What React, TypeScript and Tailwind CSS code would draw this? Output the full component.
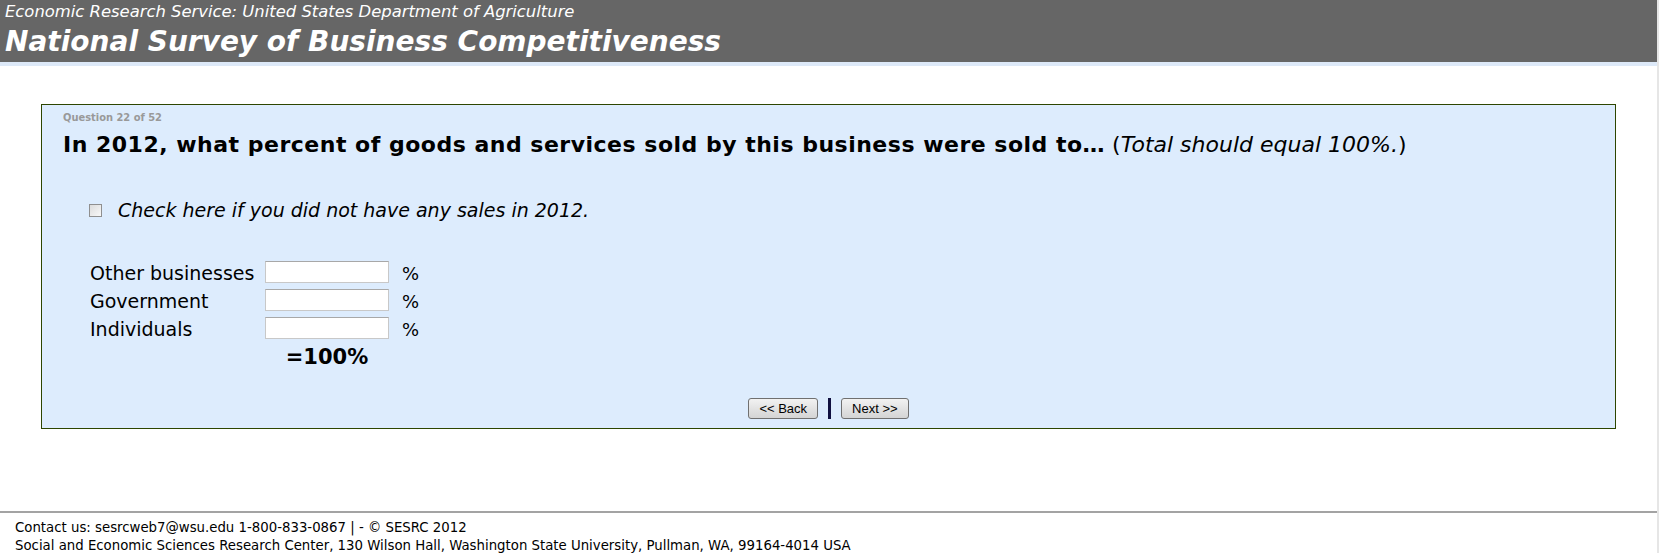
import { useState } from 'react'

const verdana = { fontFamily: '"DejaVu Sans", Verdana, sans-serif' }
const tahoma = { fontFamily: '"DejaVu Sans Condensed", "DejaVu Sans", Tahoma, sans-serif' }
const arial = { fontFamily: '"Liberation Sans", Arial, sans-serif' }

const rows = ['Other businesses', 'Government', 'Individuals']

function NavButton({ label }: { label: string }) {
  return (
    <button
      style={arial}
      className="h-[21px] rounded-[3px] border border-[#707070] bg-gradient-to-b from-[#f2f2f2] to-[#d4d4d4] px-[10px] text-[13px] leading-[19px] text-black"
    >
      {label}
    </button>
  )
}

export default function App() {
  const [noSales, setNoSales] = useState(false)
  const [values, setValues] = useState<Record<string, string>>({})

  return (
    <div className="flex min-h-[553px] w-full bg-white">
      <div className="flex flex-1 flex-col">
        {/* banner */}
        <div className="h-[62px] bg-[#666666] pl-[5px] text-white">
          <div style={verdana} className="pt-[2px] text-[16.4px] italic leading-[20px]">
            Economic Research Service: United States Department of Agriculture
          </div>
          <div style={verdana} className="pt-[1px] text-[28px] font-bold italic leading-[38px]">
            National Survey of Business Competitiveness
          </div>
        </div>
        <div className="h-[4px] bg-[#dde9f8]" />

        {/* question box */}
        <div className="mx-[41px] mt-[38px] border border-[#2d4500] bg-[#ddecfd] pb-[9px] pl-[21px] pt-[6px]">
          <div style={tahoma} className="text-[11px] font-bold leading-[14px] text-[#999999]">
            Question 22 of 52
          </div>
          <div style={verdana} className="mt-[6px] text-[22px] leading-[28px] text-black">
            <span className="font-bold tracking-[0.5px]">
              In 2012, what percent of goods and services sold by this business were sold to…
            </span>{' '}
            (<span className="italic">Total should equal 100%.</span>)
          </div>

          <label className="ml-[26px] mt-[39px] flex h-[24px] items-center">
            <input
              type="checkbox"
              checked={noSales}
              onChange={(e) => setNoSales(e.target.checked)}
              className="h-[13px] w-[13px] appearance-none border border-[#8f8f8f] bg-gradient-to-br from-[#dcdcdc] to-[#f8f8f8]"
            />
            <span style={verdana} className="ml-[16px] text-[19px] italic text-black">
              Check here if you did not have any sales in 2012.
            </span>
          </label>

          <div className="ml-[27px] mt-[39px] flex flex-col gap-[7px]">
            {rows.map((r) => (
              <div key={r} className="flex h-[21px] items-center">
                <span style={verdana} className="w-[175px] pt-[3px] text-[19px] leading-[21px] text-black">
                  {r}
                </span>
                <input
                  value={values[r] || ''}
                  onChange={(e) => setValues({ ...values, [r]: e.target.value })}
                  className="h-[22px] w-[124px] border border-[#c8c8c8] border-t-[#a8a8a8] bg-white px-1 text-[14px] outline-none"
                />
                <span style={verdana} className="ml-[13px] pt-[3px] text-[18px] leading-[21px] text-black">
                  %
                </span>
              </div>
            ))}
            <div
              style={verdana}
              className="ml-[175px] mt-[1px] w-[124px] text-center text-[21px] font-bold leading-[22px] text-black"
            >
              =100%
            </div>
          </div>

          <div className="mt-[30px] flex items-center justify-center pr-[21px]">
            <NavButton label="<< Back" />
            <div className="mx-[10px] h-[21px] w-[3px] bg-[#101040]" />
            <NavButton label="Next >>" />
          </div>
        </div>

        {/* footer */}
        <div className="mt-[82px] h-[2px] bg-[#a3a3a3]" />
        <div style={verdana} className="pl-[15px] pt-[6px] text-[13.3px] leading-[18px] text-black">
          <div>Contact us: sesrcweb7@wsu.edu 1-800-833-0867 | - © SESRC 2012</div>
          <div>
            Social and Economic Sciences Research Center, 130 Wilson Hall, Washington State University, Pullman, WA,
            99164-4014 USA
          </div>
        </div>
      </div>
      <div className="w-[2px] bg-[#e6e6e6]" />
    </div>
  )
}
